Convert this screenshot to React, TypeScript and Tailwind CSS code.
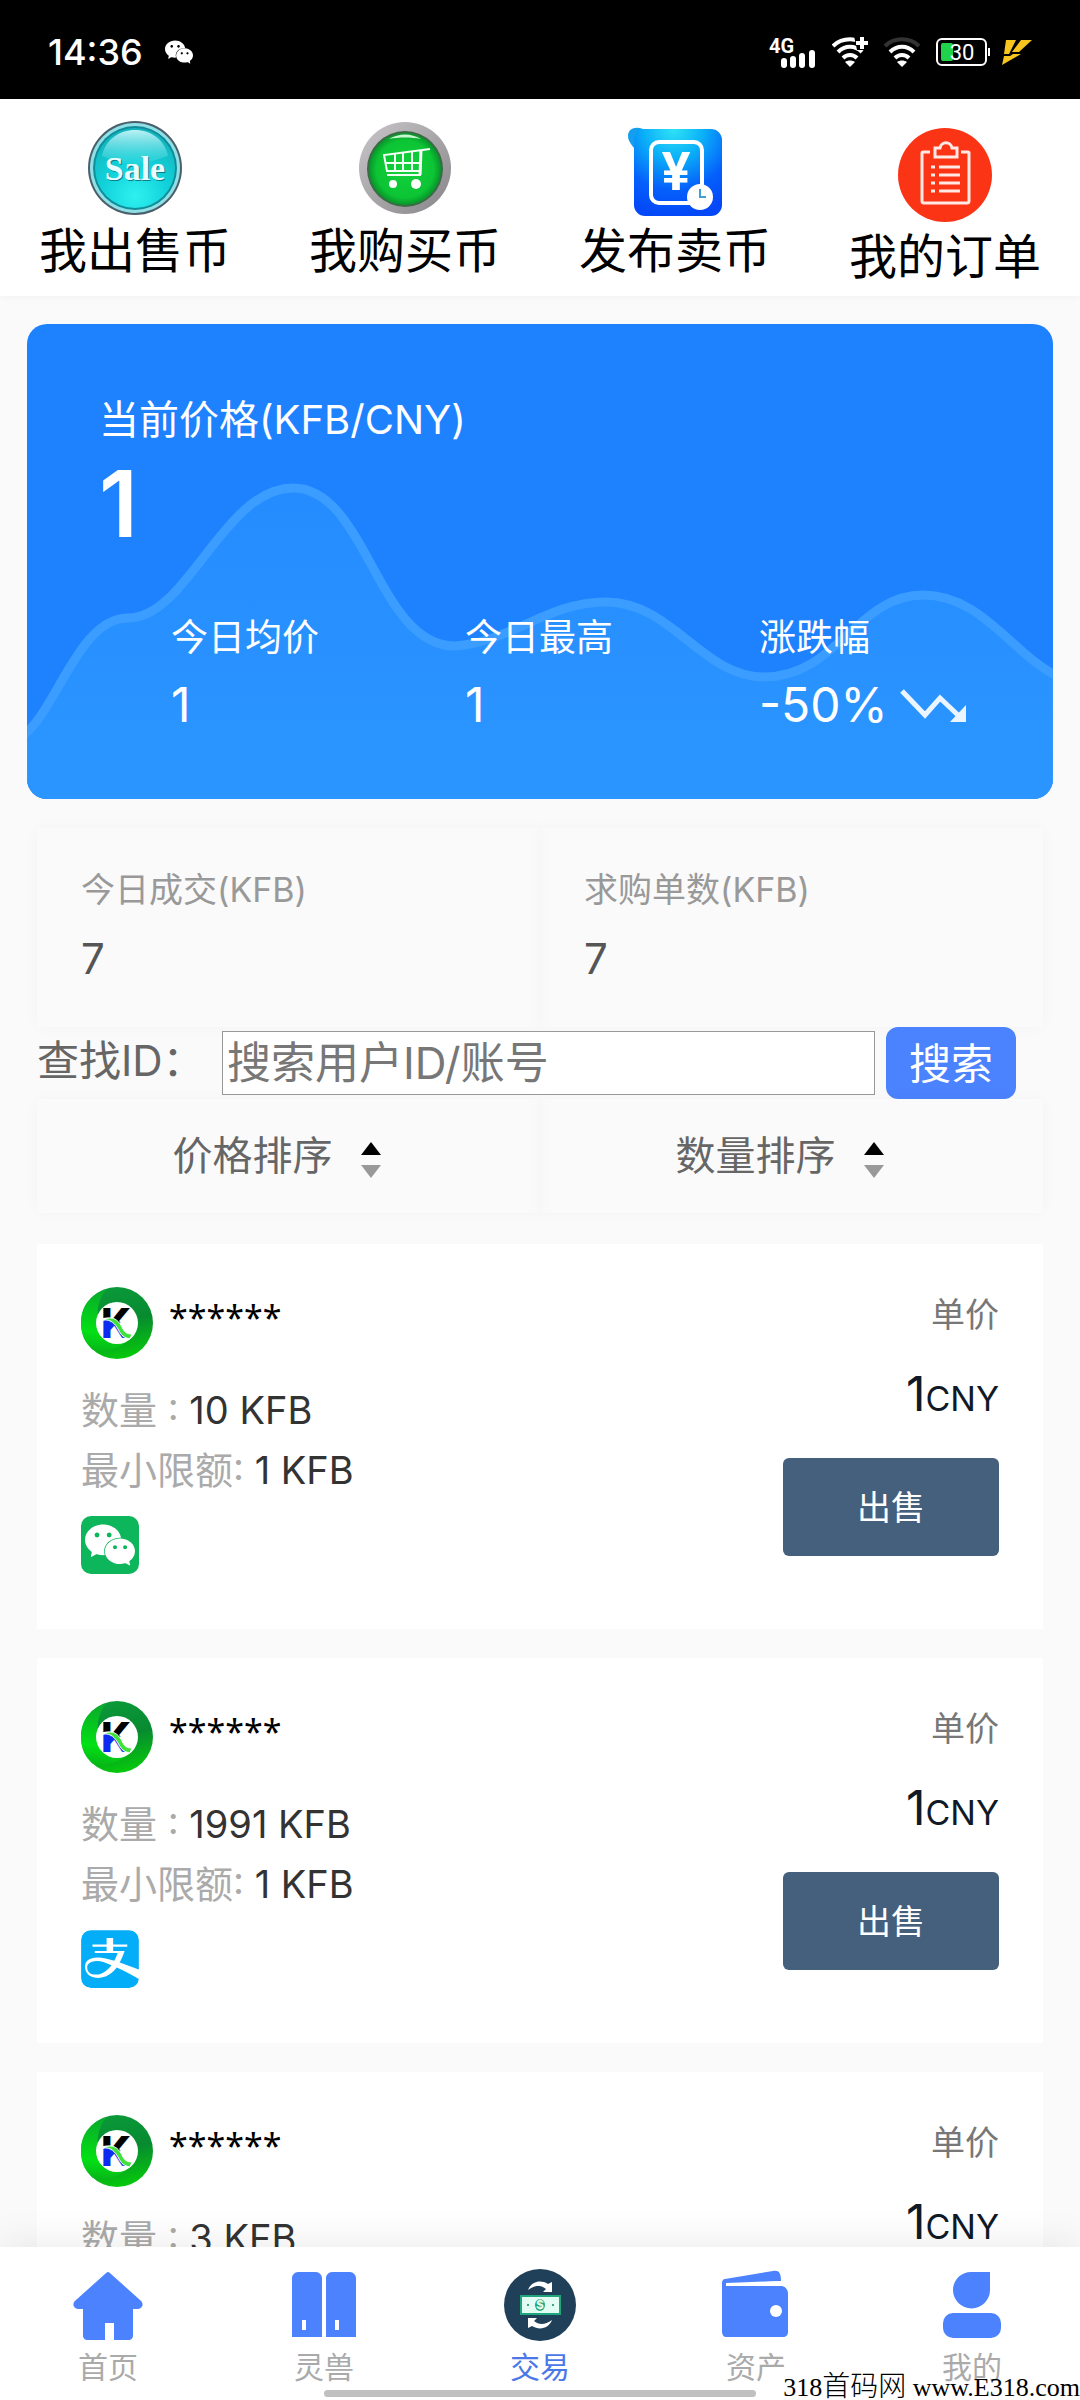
import React, { useState } from 'react';
import { FaAlipay } from 'react-icons/fa';
import { SiWechat } from 'react-icons/si';

const SaleIcon = () => (
  <svg viewBox="0 0 96 96" className="h-24 w-24" aria-hidden="true">
    <defs>
      <radialGradient id="sale-face" cx="0.5" cy="0.85" r="0.8">
        <stop offset="0" stopColor="#2ff0f0" />
        <stop offset="0.5" stopColor="#12d3da" />
        <stop offset="1" stopColor="#12b5bf" />
      </radialGradient>
      <linearGradient id="sale-shine" x1="0" y1="0" x2="0" y2="1">
        <stop offset="0" stopColor="#d9fdff" stopOpacity="0.85" />
        <stop offset="1" stopColor="#7eeef5" stopOpacity="0.1" />
      </linearGradient>
    </defs>
    <circle cx="48" cy="48" r="47" fill="#4a5f6b" />
    <circle cx="48" cy="48" r="45" fill="#8fe0e6" />
    <circle cx="48" cy="48" r="42" fill="#0f8d99" />
    <circle cx="48" cy="48" r="40" fill="url(#sale-face)" />
    <path d="M15 36C18 20 32 10 48 10s30 10 33 26c-18 6-24 8-33 8s-20-3-33-8z" fill="url(#sale-shine)" />
    <text x="49" y="61" textAnchor="middle" fontSize="34" fontWeight="700" fontFamily="Liberation Serif, serif" fill="#0a7f8b">Sale</text>
    <text x="48" y="60" textAnchor="middle" fontSize="34" fontWeight="700" fontFamily="Liberation Serif, serif" fill="#e6feff">Sale</text>
  </svg>
);

const CartIcon = () => (
  <svg viewBox="0 0 96 96" className="h-24 w-24" aria-hidden="true">
    <defs>
      <linearGradient id="cart-ring" x1="0" y1="0" x2="1" y2="1">
        <stop offset="0" stopColor="#c9c6c9" />
        <stop offset="0.5" stopColor="#a9a6a9" />
        <stop offset="1" stopColor="#87858a" />
      </linearGradient>
      <radialGradient id="cart-face" cx="0.5" cy="0.5" r="0.5">
        <stop offset="0" stopColor="#12d23c" />
        <stop offset="0.8" stopColor="#0cc434" />
        <stop offset="1" stopColor="#08952a" />
      </radialGradient>
    </defs>
    <circle cx="48" cy="48" r="46" fill="url(#cart-ring)" />
    <circle cx="48" cy="49" r="38" fill="#3b6b45" />
    <circle cx="48" cy="49" r="36" fill="url(#cart-face)" />
    <path d="M32 19c10-6 22-6 32 0-10-2-22-2-32 0z" fill="#c9f7d2" />
    <g fill="none" stroke="#f2fff4" strokeWidth="2">
      <path d="M73 29L27 35l3 16h34M64 31l-1 24H30M38 34v17M46 33v18M55 32v19M28 43h35" />
    </g>
    <path d="M64 30l-1 25" stroke="#fff" strokeWidth="3" />
    <circle cx="36" cy="64" r="4" fill="#fff" />
    <circle cx="59" cy="64" r="5" fill="#fff" />
  </svg>
);

const YuanIcon = () => (
  <svg viewBox="0 0 96 96" className="h-24 w-24" aria-hidden="true">
    <defs>
      <radialGradient id="yuan-face" cx="0.45" cy="0" r="1">
        <stop offset="0" stopColor="#2fe3f5" />
        <stop offset="0.35" stopColor="#0aaef8" />
        <stop offset="0.7" stopColor="#0560fb" />
        <stop offset="1" stopColor="#0448f8" />
      </radialGradient>
    </defs>
    <path d="M1 16C1 8 9 6 16 9c4 2 8 2 12 1L10 32C6 26 1 22 1 16z" fill="#149fee" />
    <rect x="7" y="9" width="88" height="87" rx="11" fill="url(#yuan-face)" />
    <rect x="24" y="22" width="51" height="61" rx="8" fill="none" stroke="#fff" strokeWidth="4" />
    <text x="49" y="70" textAnchor="middle" fontSize="52" fontWeight="700" fontFamily="Inter, sans-serif" fill="#fff">¥</text>
    <circle cx="73" cy="77" r="13" fill="#fff" />
    <path d="M73 69v8h6" fill="none" stroke="#3aa0d8" strokeWidth="2" />
  </svg>
);

const OrderIcon = () => (
  <svg viewBox="0 0 96 102" className="h-[102px] w-24" aria-hidden="true">
    <circle cx="48" cy="55" r="47" fill="#fb3415" />
    <g fill="none" stroke="#ffe9e4" strokeWidth="3">
      <path d="M33 32h-7a1 1 0 0 0-1 1v48a2 2 0 0 0 2 2h43a2 2 0 0 0 2-2V33a1 1 0 0 0-1-1h-7" />
      <path d="M38 28h5c1-7 11-7 12 0h5v9H38z" />
      <path d="M42 47h21M42 55h21M42 63h21M42 71h21" />
      <path d="M34 47h4M34 55h4M34 63h4M34 71h4" />
    </g>
  </svg>
);

const WifiIcon = ({ dim, plus }: { dim?: boolean; plus?: boolean }) => (
  <svg viewBox="0 0 36 32" className="h-8 w-9" aria-hidden="true">
    <g fill="none" stroke="#fff" strokeWidth="4">
      <path d="M1 10C10 1 26 1 35 10" stroke={dim ? '#333' : '#fff'} />
      <path d="M6 16c7-7 17-7 24 0" />
      <path d="M11 22c4-4 10-4 14 0" />
    </g>
    <path d="M13 26c3-2 7-2 10 0l-5 5z" fill="#fff" />
    {plus && (
      <>
        <path d="M22 0h14v14H25z" fill="#000" />
        <path d="M30 1v12M24 7h12" stroke="#fff" strokeWidth="4" />
      </>
    )}
  </svg>
);

const StatusBar = () => (
  <div className="flex h-[99px] shrink-0 items-center justify-between bg-black pt-1 pr-12 pl-12 text-white">
    <div className="flex items-center gap-[22px]">
      <span className="text-[36px] leading-10 font-medium">14:36</span>
      <SiWechat className="h-7 w-7" />
    </div>
    <div className="flex items-center gap-4">
      <svg viewBox="0 0 48 34" className="-mt-0.5 h-[34px] w-12" aria-hidden="true">
        <text x="1" y="19" fontSize="20" fontWeight="700" fontFamily="Roboto, sans-serif" fill="#fff">4G</text>
        <path d="M16 27v4M25 25v6M34 22v9M44 19v12" stroke="#fff" strokeWidth="6" strokeLinecap="round" />
      </svg>
      <WifiIcon plus />
      <WifiIcon dim />
      <svg viewBox="0 0 54 28" className="h-7 w-[54px]" aria-hidden="true">
        <rect x="1" y="1" width="49" height="26" rx="5" fill="none" stroke="#fff" strokeWidth="2" />
        <path d="M53 10v8" stroke="#fff" strokeWidth="2" />
        <rect x="5" y="5" width="12" height="18" rx="2" fill="#1fd34a" />
        <text x="26" y="22" textAnchor="middle" fontSize="22" fontFamily="Roboto, sans-serif" fill="#fff">30</text>
      </svg>
      <svg viewBox="0 0 30 26" className="-ml-1 h-[26px] w-[30px]" aria-hidden="true">
        <path d="M4 1h10L7 15H2zM19 1h11L17 13h-7zM2 17h6l3-2h8L0 26z" fill="#f7c51e" />
      </svg>
    </div>
  </div>
);

const shortcuts = [
  { label: '我出售币', icon: <SaleIcon /> },
  { label: '我购买币', icon: <CartIcon /> },
  { label: '发布卖币', icon: <YuanIcon /> },
  { label: '我的订单', icon: <OrderIcon /> },
];

const PriceCard = () => (
  <section className="relative mx-[27px] mt-7 overflow-hidden rounded-[20px] bg-[#1e82ff] text-white">
    <svg viewBox="0 0 1026 475" preserveAspectRatio="none" className="absolute inset-0 h-full w-full" aria-hidden="true">
      <defs>
        <linearGradient id="wave-fill" x1="0" y1="0" x2="0" y2="1">
          <stop offset="0" stopColor="#258cff" />
          <stop offset="1" stopColor="#2b96ff" />
        </linearGradient>
      </defs>
      <path
        d="M-4 412C30 385 52 295 100 294C160 296 196 164 266 164C340 164 350 322 428 322C485 318 520 278 579 278C645 278 675 353 737 353C810 353 830 271 896 271C955 271 985 330 1030 352V480H-4Z"
        fill="url(#wave-fill)"
        stroke="#3a9dff"
        strokeWidth="9"
      />
    </svg>
    <div className="relative pt-[70px] pb-[61px] pl-[72px]">
      <p className="text-[40px] leading-[52px]">当前价格(KFB/CNY)</p>
      <p className="text-[92px] leading-[116px] font-semibold">1</p>
      <dl className="mt-[50px] grid grid-cols-3 pl-[72px]">
        <div>
          <dt className="text-[37px] leading-[52px]">今日均价</dt>
          <dd className="mt-2 text-[48px] leading-[66px]">1</dd>
        </div>
        <div>
          <dt className="text-[37px] leading-[52px]">今日最高</dt>
          <dd className="mt-2 text-[48px] leading-[66px]">1</dd>
        </div>
        <div>
          <dt className="text-[37px] leading-[52px]">涨跌幅</dt>
          <dd className="mt-2 flex items-center gap-3 text-[48px] leading-[66px] whitespace-nowrap">
            -50%
            <svg viewBox="0 0 68 36" className="h-9 w-[68px] shrink-0" aria-hidden="true">
              <path d="M2 4l23 24 15-17 20 19" fill="none" stroke="#eaf5ff" strokeWidth="5" />
              <path d="M66 18v17H50z" fill="#eaf5ff" />
            </svg>
          </dd>
        </div>
      </dl>
    </div>
  </section>
);

const SortButton = ({ label }: { label: string }) => {
  const [desc, setDesc] = useState(false);
  return (
    <button
      type="button"
      onClick={() => setDesc(!desc)}
      className="flex h-[114px] items-center justify-center gap-7 pr-6 text-[40px] text-[#666] shadow-[0_0_14px_rgba(0,0,0,0.03)]"
    >
      {label}
      <svg viewBox="0 0 20 36" className="mt-2 h-9 w-5" aria-hidden="true">
        <path d="M10 0l10 13H0z" fill={desc ? '#999' : '#000'} />
        <path d="M10 36L0 23h20z" fill={desc ? '#000' : '#999'} />
      </svg>
    </button>
  );
};

const Avatar = () => (
  <svg viewBox="0 0 72 72" className="h-[72px] w-[72px]" aria-hidden="true">
    <defs>
      <linearGradient id="coin-a" x1="0.3" y1="0" x2="0.5" y2="1">
        <stop offset="0" stopColor="#0a9a3a" />
        <stop offset="0.5" stopColor="#088a30" />
        <stop offset="1" stopColor="#06c80c" />
      </linearGradient>
      <linearGradient id="coin-b" x1="0.4" y1="0" x2="0.3" y2="1">
        <stop offset="0" stopColor="#0aa82c" />
        <stop offset="0.7" stopColor="#02e014" />
        <stop offset="1" stopColor="#06b818" />
      </linearGradient>
      <linearGradient id="coin-k" x1="0" y1="0" x2="1" y2="0">
        <stop offset="0.3" stopColor="#0d2bf0" />
        <stop offset="1" stopColor="#1a8ad8" />
      </linearGradient>
      <clipPath id="coin-top">
        <path d="M20 18h34v18H38C34 31 28 29 20 32z" />
      </clipPath>
      <clipPath id="coin-bottom">
        <path d="M20 34c14-4 18 6 22 12l6 8H20z" />
      </clipPath>
    </defs>
    <circle cx="36" cy="36" r="36" fill="url(#coin-a)" />
    <path d="M26 2C8 8 0 20 0 36c0 12 4 20 12 27 14 2 28-1 38-13L20 42C14 30 16 12 26 2z" fill="url(#coin-b)" />
    <circle cx="36" cy="36" r="21" fill="#fff" />
    <g fontFamily="Inter, sans-serif" fontSize="41" fontWeight="800">
      <text x="20" y="51" fill="#000" clipPath="url(#coin-top)">K</text>
      <text x="20" y="51" fill="url(#coin-k)" clipPath="url(#coin-bottom)">K</text>
    </g>
    <path d="M22 33c12-6 17 3 20 9 2 4 5 5 9 5l-2 5c-6-1-9-4-12-10-3-5-7-10-15-9z" fill="#3ee23a" stroke="#fff" strokeWidth="1" />
  </svg>
);

type Order = { id: number; amount: string; min: string; pay: 'wechat' | 'alipay' };

const orders: Order[] = [
  { id: 1, amount: '10', min: '1', pay: 'wechat' },
  { id: 2, amount: '1991', min: '1', pay: 'alipay' },
  { id: 3, amount: '3', min: '1', pay: 'wechat' },
];

const OrderCard = ({ order }: { order: Order }) => (
  <li className="flex h-[385px] justify-between bg-white px-11 pt-[43px]">
    <div>
      <div className="flex gap-4">
        <Avatar />
        <span className="pt-1 font-['Noto_Sans',sans-serif] text-[34px] leading-[52px] text-black">******</span>
      </div>
      <p className="mt-[21px] text-[38px] leading-[60px] text-[#333]">
        <span className="text-[#aaa]">数量 : </span>
        {order.amount} KFB
      </p>
      <p className="text-[38px] leading-[60px] text-[#333]">
        <span className="text-[#aaa]">最小限额: </span>
        {order.min} KFB
      </p>
      {order.pay === 'wechat' ? (
        <div className="mt-4 flex h-[58px] w-[58px] items-center justify-center rounded-[10px] bg-[#0db65b] text-white">
          <SiWechat className="h-[50px] w-[50px]" />
        </div>
      ) : (
        <div className="mt-4 h-[58px] w-[58px] overflow-hidden rounded-[10px] bg-white text-[#04adf8]">
          <FaAlipay className="-mt-1 h-[66px] w-[58px]" />
        </div>
      )}
    </div>
    <div className="flex flex-col items-end pt-0.5">
      <span className="text-[34px] leading-[52px] text-[#777]">单价</span>
      <p className="mt-5 leading-[66px] text-[#0f1a26]">
        <span className="text-[48px]">1</span>
        <span className="text-[34px]">CNY</span>
      </p>
      <button type="button" className="mt-5 h-[98px] w-[216px] rounded-md bg-[#45607c] text-[34px] text-white">
        出售
      </button>
    </div>
  </li>
);

const navItems = [
  {
    label: '首页',
    icon: (
      <svg viewBox="0 0 72 72" className="h-[72px] w-[72px] fill-[#4c82fd]" aria-hidden="true">
        <path d="M36 3c1 0 2 1 3 2l29 26c5 4 2 9-3 9h-4v27c0 2-2 4-4 4H42V54h-9v17H15c-2 0-4-2-4-4V40H7c-5 0-8-5-3-9L33 5c1-1 2-2 3-2z" />
      </svg>
    ),
  },
  {
    label: '灵兽',
    icon: (
      <svg viewBox="0 0 72 72" className="h-[72px] w-[72px] fill-[#4c82fd]" aria-hidden="true">
        <path d="M4 9c0-3 3-6 6-6h18c3 0 6 3 6 6v59H4zM38 9c0-3 3-6 6-6h18c3 0 6 3 6 6v59H38z" />
        <path d="M14 51h4v10h-4zM47 51h4v10h-4z" fill="#fff" />
      </svg>
    ),
  },
  {
    label: '交易',
    icon: (
      <svg viewBox="0 0 72 72" className="h-[72px] w-[72px]" aria-hidden="true">
        <circle cx="36" cy="36" r="36" fill="#20405a" />
        <path d="M24 21c3-8 12-11 20-6l4-2v10h-9l3-3c-5-4-11-4-18 1z" fill="#fff" />
        <path d="M48 51c-3 8-12 11-20 6l-4 2V49h9l-3 3c5 4 11 4 18-1z" fill="#fff" />
        <rect x="17" y="27" width="39" height="18" fill="#e2fdf3" stroke="#1fa67d" strokeWidth="2" />
        <ellipse cx="36" cy="36" rx="5" ry="6" fill="#1fa67d" />
        <text x="36" y="40" textAnchor="middle" fontSize="12" fontWeight="700" fontFamily="Inter, sans-serif" fill="#e2fdf3">$</text>
        <circle cx="24" cy="36" r="1" fill="#14805e" />
        <circle cx="49" cy="36" r="1" fill="#14805e" />
      </svg>
    ),
  },
  {
    label: '资产',
    icon: (
      <svg viewBox="0 0 72 72" className="h-[72px] w-[72px] fill-[#4c82fd]" aria-hidden="true">
        <path d="M5 10L53 2c6-1 8 2 8 10l-55 3V17h56c4 1 6 4 6 8v38c0 3-2 5-5 5H6c-2 0-4-2-4-5V14c0-2 1-4 3-4z" />
        <path d="M6 14l55-2v5H6z" fill="#fff" />
        <circle cx="56" cy="42" r="6" fill="#fff" />
      </svg>
    ),
  },
  {
    label: '我的',
    icon: (
      <svg viewBox="0 0 72 72" className="h-[72px] w-[72px] fill-[#4c82fd]" aria-hidden="true">
        <path d="M35 3h19v18a18 18 0 0 1-37 0C17 11 25 3 35 3z" />
        <rect x="7" y="44" width="58" height="25" rx="10" />
      </svg>
    ),
  },
];

const App = () => {
  const [keyword, setKeyword] = useState('');
  const [active, setActive] = useState('交易');

  return (
    <div className="relative flex h-screen flex-col overflow-hidden bg-[#fafafa] font-['Inter','Noto_Sans_CJK_SC',sans-serif]">
      <StatusBar />

      <main className="min-h-0 flex-1 overflow-y-auto [scrollbar-width:none]">
        <nav className="grid grid-cols-4 items-start bg-white pt-[21px] pb-1 shadow-[0_0_8px_rgba(0,0,0,0.05)]">
          {shortcuts.map((item) => (
            <a key={item.label} href="#" className="flex flex-col items-center text-black">
              {item.icon}
              <span className="text-[48px] leading-[70px]">{item.label}</span>
            </a>
          ))}
        </nav>

        <PriceCard />

        <div className="px-[37px] pt-[29px]">
          <dl className="grid grid-cols-2">
            <div className="h-[199px] pt-9 pl-11 shadow-[0_0_14px_rgba(0,0,0,0.03)]">
              <dt className="text-[34px] leading-[52px] text-[#999]">今日成交(KFB)</dt>
              <dd className="mt-2.5 text-[42px] leading-[66px] text-[#555]">7</dd>
            </div>
            <div className="h-[199px] pt-9 pl-11 shadow-[0_0_14px_rgba(0,0,0,0.03)]">
              <dt className="text-[34px] leading-[52px] text-[#999]">求购单数(KFB)</dt>
              <dd className="mt-2.5 text-[42px] leading-[66px] text-[#555]">7</dd>
            </div>
          </dl>

          <form className="flex items-center pr-[27px]" onSubmit={(e) => e.preventDefault()}>
            <label htmlFor="keyword" className="w-[185px] shrink-0 pb-1 text-[42px] leading-[64px] whitespace-nowrap text-[#666]">
              查找ID：
            </label>
            <input
              id="keyword"
              type="text"
              value={keyword}
              onChange={(e) => setKeyword(e.target.value)}
              placeholder="搜索用户ID/账号"
              className="h-[64px] min-w-0 flex-1 border border-[#999] bg-white px-1 text-[44px] text-[#333] placeholder:text-[#777]"
            />
            <button type="submit" className="ml-[11px] h-[72px] w-[130px] rounded-xl bg-[#4b82fd] text-[42px] text-white">
              搜索
            </button>
          </form>

          <div className="grid grid-cols-2">
            <SortButton label="价格排序" />
            <SortButton label="数量排序" />
          </div>

          <ul className="mt-[31px] flex flex-col gap-[29px]">
            {orders.map((order) => (
              <OrderCard key={order.id} order={order} />
            ))}
          </ul>
        </div>
      </main>

      <nav className="relative grid h-[153px] shrink-0 grid-cols-5 bg-white pt-[22px] shadow-[0_-4px_36px_rgba(0,0,0,0.08)]">
        {navItems.map((item) => (
          <button
            key={item.label}
            type="button"
            onClick={() => setActive(item.label)}
            className={`flex flex-col items-center text-[30px] leading-[52px] ${
              active === item.label ? 'text-[#4b78e8]' : 'text-[#aaa]'
            }`}
          >
            {item.icon}
            {item.label}
          </button>
        ))}
        {/* Gesture bar */}
        <div className="absolute bottom-[3px] left-[30%] h-[7px] w-2/5 rounded-full bg-[#c0c0c0]"></div>
        <p className="absolute right-0 bottom-0 font-['Liberation_Serif','Noto_Sans_CJK_SC',serif] text-[26px] leading-6 whitespace-nowrap text-black">
          318<span className="text-[28px] font-light">首码网</span> www.E318.com
        </p>
      </nav>
    </div>
  );
};

export default App;
